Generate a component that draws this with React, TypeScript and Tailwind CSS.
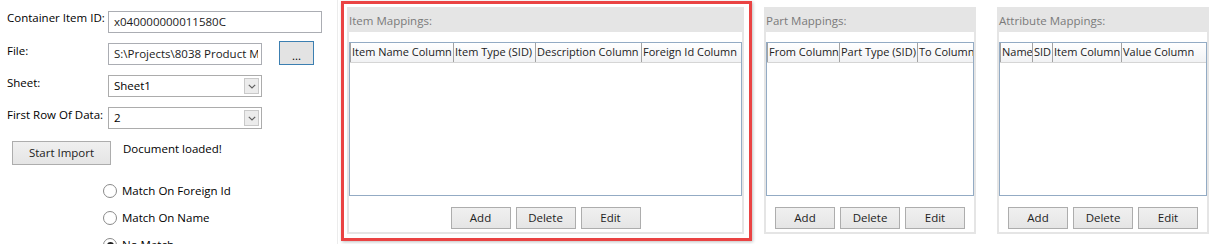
import React from 'react';

type Col = { label: string; w?: number };

const Chevron: React.FC = () => (
  <svg width="8" height="5" viewBox="0 0 8 5" fill="none">
    <path d="M0.8 0.8 L4 4 L7.2 0.8" stroke="#606060" strokeWidth="1.2" />
  </svg>
);

const GrayButton: React.FC<{ label: string; className?: string }> = ({ label, className }) => (
  <div
    className={`flex items-center justify-center border border-[#adadad] bg-gradient-to-b from-[#f0f0f0] to-[#e5e5e5] text-[#222] ${className ?? ''}`}
  >
    {label}
  </div>
);

const ComboBox: React.FC<{ value: string }> = ({ value }) => (
  <div className="flex h-[22px] w-[154px] items-center border border-[#acacac] bg-white pl-[5px] pr-[2px]">
    <span className="flex-1 truncate">{value}</span>
    <div className="flex h-[16px] w-[15px] items-center justify-center border border-[#c9c9c9] bg-[#ececec]">
      <Chevron />
    </div>
  </div>
);

const Radio: React.FC<{ label: string; checked?: boolean; className?: string }> = ({ label, checked, className }) => (
  <div className={`flex h-[16px] items-center ${className ?? ''}`}>
    <div className="flex h-[14px] w-[14px] items-center justify-center rounded-full border border-[#8a8a8a] bg-white">
      {checked && <div className="h-[7px] w-[7px] rounded-full bg-[#1f1f1f]" />}
    </div>
    <span className="ml-[5px]">{label}</span>
  </div>
);

const MappingPanel: React.FC<{ title: string; cols: Col[]; className?: string }> = ({ title, cols, className }) => (
  <div className={`flex h-[227px] flex-col border-2 border-[#e5e5e5] bg-white ${className ?? ''}`}>
    <div className="h-[23px] shrink-0 bg-[#e5e5e5] pt-[4px] leading-[16px] text-[#7a7a7a]">{title}</div>
    <div className="mt-[10px] h-[154px] shrink-0 overflow-hidden border border-[#93abc4]">
      <div className="flex h-[20px] border-b border-[#d5d5d5] bg-gradient-to-b from-white to-[#f1f2f4] text-[11px]">
        {cols.map((c, i) => (
          <div
            key={c.label}
            className={`flex items-center overflow-hidden whitespace-nowrap border-r border-[#a3a3a3] pl-[1px] text-[#222] ${
              i === 0 ? 'border-l' : ''
            } ${c.w ? 'shrink-0' : 'flex-1 border-r-0'}`}
            style={c.w ? { width: c.w } : undefined}
          >
            {c.label}
          </div>
        ))}
      </div>
    </div>
    <div className="mt-[11px] flex justify-center gap-[5px]">
      <GrayButton label="Add" className="h-[22px] w-[60px]" />
      <GrayButton label="Delete" className="h-[22px] w-[60px]" />
      <GrayButton label="Edit" className="h-[22px] w-[60px]" />
    </div>
  </div>
);

export default function App() {
  return (
    <div className="flex h-[244px] w-[1219px] overflow-hidden bg-white font-['Open_Sans','Noto_Sans',sans-serif] text-[11.5px] text-black">
      {/* left form */}
      <div className="w-[337px] shrink-0 pt-[11px]">
        <div className="flex h-[22px] items-start">
          <span className="ml-[7px] mt-[-1px] w-[101px] leading-[16px]">Container Item ID:</span>
          <div className="flex h-[22px] w-[214px] items-center border border-[#abadb3] bg-white pl-[5px] text-[#1a1a1a]">
            x040000000011580C
          </div>
        </div>
        <div className="mt-[10px] flex h-[22px] items-start">
          <span className="ml-[7px] w-[101px] leading-[16px]">File:</span>
          <div className="flex h-[22px] w-[154px] items-center border border-[#abadb3] bg-white pl-[5px] pr-[3px] text-[#1a1a1a]">
            <span className="overflow-hidden whitespace-nowrap">S:\Projects\8038 Product Mapping\Import.xlsx</span>
          </div>
          <div className="ml-[17px] mt-[-2px] flex h-[24px] w-[35px] items-end justify-center border border-[#3c7fb1] bg-[#e3e3e3] pb-[2px] leading-[12px]">
            ...
          </div>
        </div>
        <div className="mt-[10px] flex h-[22px] items-start">
          <span className="ml-[7px] w-[101px] leading-[16px]">Sheet:</span>
          <ComboBox value="Sheet1" />
        </div>
        <div className="mt-[10px] flex h-[22px] items-start">
          <span className="ml-[7px] w-[101px] leading-[16px]">First Row Of Data:</span>
          <ComboBox value="2" />
        </div>
        <div className="mt-[12px] flex items-start">
          <GrayButton label="Start Import" className="ml-[12px] h-[24px] w-[99px]" />
          <span className="ml-[12px] leading-[16px]">Document loaded!</span>
        </div>
        <div className="ml-[103px] mt-[18px]">
          <Radio label="Match On Foreign Id" />
          <Radio label="Match On Name" className="mt-[11px]" />
          <Radio label="No Match" checked className="mt-[11px]" />
        </div>
      </div>
      <div className="w-px shrink-0 bg-[#ececec]" />

      {/* highlighted item mappings */}
      <div className="ml-[3px] mt-[1px] h-[240px] w-[411px] shrink-0 border-[3px] border-[#ea4343] pb-[3px] pl-[3px] pr-[5px] pt-[3px] shadow-[1px_1px_3px_rgba(0,0,0,0.25)]">
        <MappingPanel
          title="Item Mappings:"
          className="w-[397px]"
          cols={[
            { label: 'Item Name Column', w: 104 },
            { label: 'Item Type (SID)', w: 82 },
            { label: 'Description Column', w: 106 },
            { label: 'Foreign Id Column' },
          ]}
        />
      </div>

      <MappingPanel
        title="Part Mappings:"
        className="ml-[12px] mt-[7px] w-[212px] shrink-0"
        cols={[
          { label: 'From Column', w: 73 },
          { label: 'Part Type (SID)', w: 78 },
          { label: 'To Column' },
        ]}
      />

      <MappingPanel
        title="Attribute Mappings:"
        className="ml-[21px] mt-[7px] w-[212px] shrink-0"
        cols={[
          { label: 'Name', w: 33 },
          { label: 'SID', w: 20 },
          { label: 'Item Column', w: 69 },
          { label: 'Value Column' },
        ]}
      />
    </div>
  );
}
